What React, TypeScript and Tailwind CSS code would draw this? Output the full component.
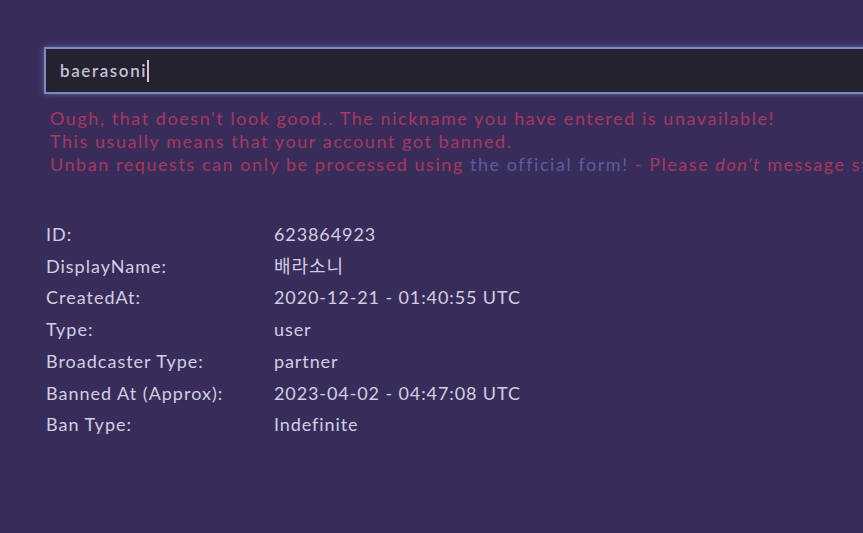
import React from 'react';

const rows: [string, string][] = [
  ['ID:', '623864923'],
  ['DisplayName:', '배라소니'],
  ['CreatedAt:', '2020-12-21 - 01:40:55 UTC'],
  ['Type:', 'user'],
  ['Broadcaster Type:', 'partner'],
  ['Banned At (Approx):', '2023-04-02 - 04:47:08 UTC'],
  ['Ban Type:', 'Indefinite'],
];

export default function App() {
  return (
    <div
      className="h-[533px] w-[863px] overflow-hidden bg-[#382d5a]"
      style={{ fontFamily: 'Lato, "Noto Sans CJK KR", sans-serif' }}
    >
      {/* Nickname input */}
      <div className="pl-[44px] pt-[47px]">
        <div className="flex h-[47px] w-[900px] items-center border-2 border-[#7b8cc4] bg-[#25222f] pl-[14px] shadow-[0_0_6px_rgba(130,150,220,0.5)]">
          <span className="text-[17px] font-semibold tracking-[1.6px] text-[#c4c0da]">baerasoni</span>
          <span className="h-[22px] w-[2px] bg-[#c9c5dc]" />
        </div>
      </div>

      {/* Error message */}
      <div className="mt-[13px] whitespace-nowrap pl-[50px] text-[18px] leading-[23px] tracking-[1.55px] text-[#a9375f]">
        <p>Ough, that doesn't look good.. The nickname you have entered is unavailable!</p>
        <p>This usually means that your account got banned.</p>
        <p>
          Unban requests can only be processed using{' '}
          <span className="text-[#5c5ba0]">the official form!</span> - Please <i>don't</i> message staff
        </p>
      </div>

      {/* Account details */}
      <div className="mt-[43px] grid grid-cols-[228px_1fr] pl-[46px] text-[18px] leading-[31.7px] text-[#d2cee2]">
        {rows.map(([label, value]) => (
          <React.Fragment key={label}>
            <span className="tracking-[1px]">{label}</span>
            <span className="tracking-[0.9px]">{value}</span>
          </React.Fragment>
        ))}
      </div>
    </div>
  );
}
